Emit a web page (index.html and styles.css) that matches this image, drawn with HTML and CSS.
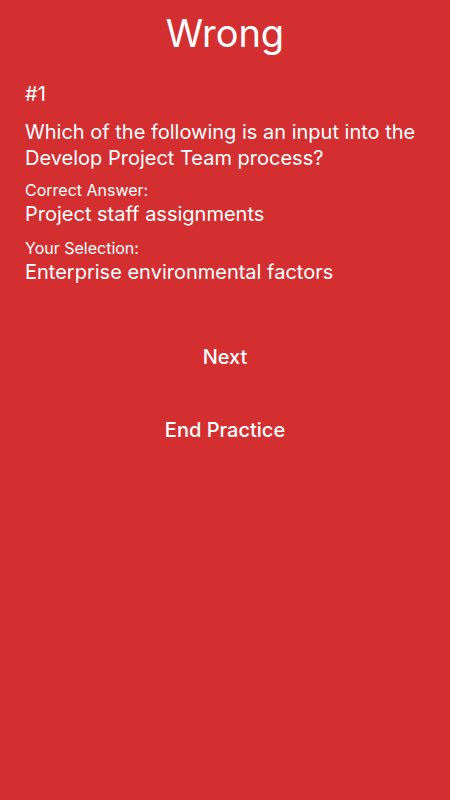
FILE: index.html
```html
<html>
<head>
	<title>Wrong</title>
	<link rel="stylesheet" href="styles.css">
</head>
<body>
	<div class="page">
		<div class="result_title">Wrong</div>
		<div class="question_num">#1</div>
		<div class="question">Which of the following is an input into the Develop Project Team process?</div>
		<div class="label">Correct Answer:</div>
		<div class="answer">Project staff assignments</div>
		<div class="label">Your Selection:</div>
		<div class="answer">Enterprise environmental factors</div>
		<div class="actions">
			<button class="action">Next</button>
			<button class="action">End Practice</button>
		</div>
	</div>
</body>
</html>
```

FILE: styles.css
```css
html, body {
	margin: 0;
	height: 100%;
	background-color: #D32F31;
}
.page {
	font-family: Inter, "Open Sans", Roboto, sans-serif;
	color: #FFF;
	padding: 0 25px;
}
.result_title {
	text-align: center;
	font-size: 38px;
	line-height: 48px;
	padding-top: 9px;
}
.question_num {
	font-size: 20px;
	line-height: 26px;
	margin-top: 24px;
}
.question {
	font-size: 20px;
	line-height: 26px;
	margin-top: 12px;
}
.label {
	font-size: 16px;
	line-height: 20px;
	margin-top: 9px;
}
.answer + .label {
	margin-top: 11px;
}
.answer {
	font-size: 20px;
	line-height: 26px;
	margin-top: 1px;
}
.actions {
	display: flex;
	flex-direction: column;
	align-items: center;
	gap: 47px;
	margin-top: 59px;
}
.action {
	background: none;
	border: none;
	color: #FFF;
	font-family: Inter, "Open Sans", Roboto, sans-serif;
	font-size: 20px;
	font-weight: 500;
	line-height: 26px;
	padding: 0;
}
```
